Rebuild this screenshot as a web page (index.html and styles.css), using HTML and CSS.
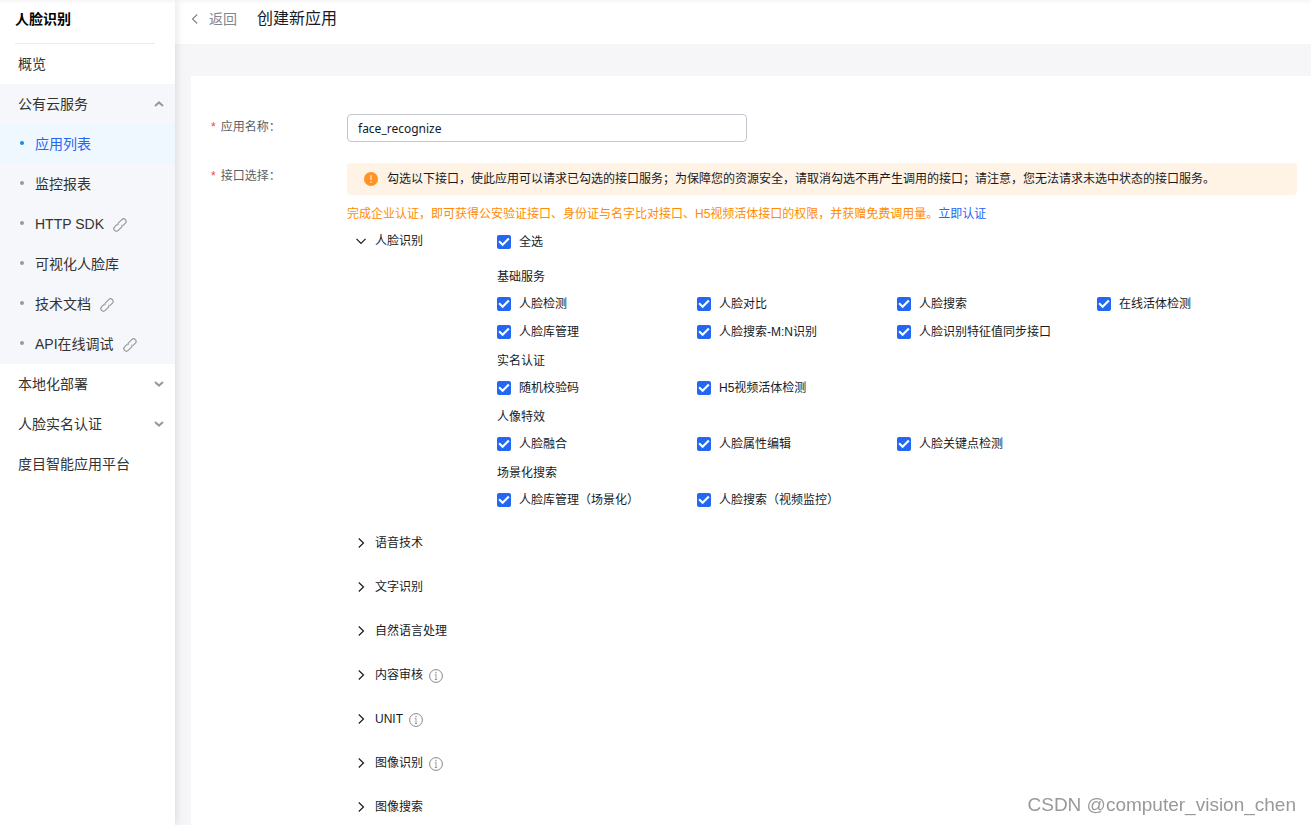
FILE: index.html
```html
<!DOCTYPE html>
<html lang="zh-CN">
<head>
<meta charset="utf-8">
<title>创建新应用</title>
<link rel="stylesheet" href="styles.css">
</head>
<body>
<svg class="sprite" aria-hidden="true">
  <symbol id="chevron" viewBox="0 0 12 12"><path d="M1.500 3.800 6 8.500 10.500 3.800" fill="none" stroke="currentColor"/></symbol>
  <symbol id="caret" viewBox="0 0 12 12"><path d="M2 4 6 7.600 10 4" fill="none" stroke="currentColor"/></symbol>
  <symbol id="link" viewBox="0 0 14 14"><g fill="none" stroke="currentColor" stroke-width="1.200"><path d="M5.200 7.200C4.700 6.200 4.900 5.400 5.700 4.600L8.800 1.600a2.500 2.500 0 0 1 3.600 3.600L10 7.600"/><path d="M8.800 6.800C9.300 7.800 9.100 8.600 8.300 9.400L5.200 12.400a2.500 2.500 0 0 1-3.600-3.600L4 6.400"/></g></symbol>
  <symbol id="info" viewBox="0 0 14 14"><circle cx="7" cy="7" r="6.400" fill="none" stroke="currentColor"/><path d="M7 5.500v5M5.800 5.500H7M5.800 10.500h2.400" fill="none" stroke="currentColor" stroke-width=".8"/><circle cx="7" cy="3.500" r=".7" fill="currentColor"/></symbol>
</svg>
<div class="layout">
  <aside class="sidebar">
    <h2 class="sidebar-title">人脸识别</h2>
    <nav class="menu">
      <a class="menu-item" href="#">概览</a>
      <div class="menu-group">
        <button class="menu-item" type="button" aria-expanded="true">公有云服务<svg class="menu-arrow up"><use href="#caret"/></svg></button>
        <a class="menu-item sub active" href="#">应用列表</a>
        <a class="menu-item sub" href="#">监控报表</a>
        <a class="menu-item sub" href="#">HTTP SDK<svg class="link-icon"><use href="#link"/></svg></a>
        <a class="menu-item sub" href="#">可视化人脸库</a>
        <a class="menu-item sub" href="#">技术文档<svg class="link-icon"><use href="#link"/></svg></a>
        <a class="menu-item sub" href="#">API在线调试<svg class="link-icon"><use href="#link"/></svg></a>
      </div>
      <button class="menu-item" type="button" aria-expanded="false">本地化部署<svg class="menu-arrow"><use href="#caret"/></svg></button>
      <button class="menu-item" type="button" aria-expanded="false">人脸实名认证<svg class="menu-arrow"><use href="#caret"/></svg></button>
      <a class="menu-item" href="#">度目智能应用平台</a>
    </nav>
  </aside>
  <main class="main">
    <header class="page-header">
      <a class="back" href="#"><svg class="back-icon"><use href="#chevron"/></svg>返回</a>
      <h1 class="page-title">创建新应用</h1>
    </header>
    <form class="card">
      <div class="form-row">
        <label class="form-label" for="app-name"><span class="required">*</span>应用名称：</label>
        <input class="text-input" id="app-name" type="text" value="face_recognize">
      </div>
      <div class="form-row">
        <span class="form-label"><span class="required">*</span>接口选择：</span>
        <div class="form-field">
          <div class="alert">
            <svg class="alert-icon" viewBox="0 0 14 14"><circle cx="7" cy="7" r="7" fill="#ff9326"/><path d="M7 3v5M7 9.500v1.500" stroke="#ffe3c4" stroke-width="1.300"/></svg>
            <span>勾选以下接口，使此应用可以请求已勾选的接口服务；为保障您的资源安全，请取消勾选不再产生调用的接口；请注意，您无法请求未选中状态的接口服务。</span>
          </div>
          <p class="tip">完成企业认证，即可获得公安验证接口、身份证与名字比对接口、H5视频活体接口的权限，并获赠免费调用量。<a class="tip-link" href="#">立即认证</a></p>
          <section class="service open">
            <button class="service-name" type="button" aria-expanded="true"><svg class="service-arrow"><use href="#chevron"/></svg>人脸识别</button>
            <div class="service-body">
              <label class="check all"><input type="checkbox" checked>全选</label>
              <h3 class="group-name">基础服务</h3>
              <div class="checks">
                <label class="check"><input type="checkbox" checked>人脸检测</label>
                <label class="check"><input type="checkbox" checked>人脸对比</label>
                <label class="check"><input type="checkbox" checked>人脸搜索</label>
                <label class="check"><input type="checkbox" checked>在线活体检测</label>
                <label class="check"><input type="checkbox" checked>人脸库管理</label>
                <label class="check"><input type="checkbox" checked>人脸搜索-M:N识别</label>
                <label class="check"><input type="checkbox" checked>人脸识别特征值同步接口</label>
              </div>
              <h3 class="group-name">实名认证</h3>
              <div class="checks">
                <label class="check"><input type="checkbox" checked>随机校验码</label>
                <label class="check"><input type="checkbox" checked>H5视频活体检测</label>
              </div>
              <h3 class="group-name">人像特效</h3>
              <div class="checks">
                <label class="check"><input type="checkbox" checked>人脸融合</label>
                <label class="check"><input type="checkbox" checked>人脸属性编辑</label>
                <label class="check"><input type="checkbox" checked>人脸关键点检测</label>
              </div>
              <h3 class="group-name">场景化搜索</h3>
              <div class="checks">
                <label class="check"><input type="checkbox" checked>人脸库管理（场景化）</label>
                <label class="check"><input type="checkbox" checked>人脸搜索（视频监控）</label>
              </div>
            </div>
          </section>
          <button class="service-name" type="button"><svg class="service-arrow right"><use href="#chevron"/></svg>语音技术</button>
          <button class="service-name" type="button"><svg class="service-arrow right"><use href="#chevron"/></svg>文字识别</button>
          <button class="service-name" type="button"><svg class="service-arrow right"><use href="#chevron"/></svg>自然语言处理</button>
          <button class="service-name" type="button"><svg class="service-arrow right"><use href="#chevron"/></svg>内容审核<svg class="info-icon"><use href="#info"/></svg></button>
          <button class="service-name" type="button"><svg class="service-arrow right"><use href="#chevron"/></svg>UNIT<svg class="info-icon"><use href="#info"/></svg></button>
          <button class="service-name" type="button"><svg class="service-arrow right"><use href="#chevron"/></svg>图像识别<svg class="info-icon"><use href="#info"/></svg></button>
          <button class="service-name" type="button"><svg class="service-arrow right"><use href="#chevron"/></svg>图像搜索</button>
        </div>
      </div>
    </form>
  </main>
</div>
<div class="watermark">CSDN @computer_vision_chen</div>
</body>
</html>
```

FILE: styles.css
```css
* { box-sizing: border-box; }

body {
  margin: 0;
  font: 12px/20px "Liberation Sans", "Noto Sans CJK SC", sans-serif;
  color: #151b26;
  background: #f6f6f8;
}

h1, h2, h3, p { margin: 0; font-weight: 400; }
a { text-decoration: none; color: inherit; }
button {
  border: 0;
  padding: 0;
  background: none;
  font: inherit;
  color: inherit;
  text-align: left;
  cursor: pointer;
}
svg { flex: none; }
.sprite { display: none; }

.layout {
  display: flex;
  height: 100vh;
  overflow: hidden;
}

/* Sidebar */
.sidebar {
  flex: none;
  width: 175px;
  background: linear-gradient(#f5f5f5, #fff 4px);
  box-shadow: 0 0 10px rgba(0, 0, 0, .14);
  z-index: 1;
}
.sidebar-title {
  margin: 0 20px 0 15px;
  height: 44px;
  border-bottom: 1px solid #ebebeb;
  font-size: 14px;
  line-height: 38px;
  font-weight: 700;
  color: #000;
}
.menu-item {
  display: flex;
  align-items: center;
  width: 100%;
  height: 40px;
  padding: 0 10px 0 18px;
  font-size: 14px;
  color: #333;
}
.menu-group { background: #f5f7fa; }
.menu-arrow {
  width: 12px;
  height: 12px;
  margin-left: auto;
  color: #999;
  stroke-width: 2;
}
.up { transform: rotate(180deg); }
.sub::before {
  content: "";
  width: 4px;
  height: 4px;
  margin: 0 11px 2px 2px;
  border-radius: 50%;
  background: #999;
}
.active { background: #f0f8ff; color: #2468f2; }
.active::before { background: #108cee; }
.link-icon {
  width: 14px;
  height: 14px;
  margin: 2px 0 0 9px;
  color: #999;
}

/* Page */
.main { flex: 1; min-width: 0; }
.page-header {
  display: flex;
  align-items: center;
  gap: 20px;
  height: 44px;
  padding: 0 14px 6px;
  background: linear-gradient(#f5f5f5, #fff 4px);
}
.back {
  display: flex;
  align-items: center;
  gap: 8px;
  font-size: 14px;
  color: #84868c;
}
.back-icon {
  width: 12px;
  height: 12px;
  stroke-width: 1.2;
  transform: rotate(90deg);
}
.page-title { font-size: 16px; }

.card {
  display: flex;
  flex-direction: column;
  gap: 21px;
  margin: 32px 0 0 16px;
  padding: 38px 14px 24px 20px;
  background: #fff;
}
.form-row { display: flex; align-items: flex-start; }
.form-label {
  flex: none;
  display: flex;
  gap: 5px;
  width: 136px;
  padding-top: 3px;
  color: #5c5f66;
}
.required { color: #f33e3e; }
.form-field { flex: 1; min-width: 0; }
.text-input {
  width: 400px;
  height: 28px;
  padding: 0 10px;
  border: 1px solid #c3c6cc;
  border-radius: 4px;
  background: #fff;
  font: 12px "Noto Sans", "Noto Sans CJK SC", sans-serif;
  color: #151b26;
}

.alert {
  display: flex;
  align-items: center;
  gap: 9px;
  padding: 6px 17px;
  border-radius: 4px;
  background: #fff3e6;
}
.alert-icon { width: 14px; height: 14px; }
.tip { margin-top: 9px; color: #ff8b00; }
.tip-link { color: #2468f2; }

.service { display: flex; padding-bottom: 6px; }
.service-name {
  display: flex;
  align-items: center;
  height: 44px;
  padding-left: 8px;
}
.service .service-name { width: 150px; height: 34px; }
.service-arrow {
  width: 12px;
  height: 12px;
  margin-right: 8px;
  stroke-width: 1.2;
}
.right { transform: rotate(-90deg); }
.info-icon {
  width: 14px;
  height: 14px;
  margin: 2px 0 0 6px;
  color: #84868c;
}

.service-body { flex: 1; min-width: 0; }
.group-name { font-size: 12px; line-height: 28px; }
.checks {
  display: grid;
  grid-template-columns: repeat(auto-fill, 200px);
  margin: -1px 0 1px;
}
.check {
  display: flex;
  align-items: center;
  gap: 8px;
  height: 28px;
}
.all { width: 50px; height: 36px; margin-bottom: 3px; }
.check input {
  flex: none;
  appearance: none;
  display: flex;
  width: 14px;
  height: 14px;
  margin: 0;
  border-radius: 2px;
  background: #c3c6cc;
}
.check input:checked { background: #2468f2; }
.check input:checked::after {
  content: "";
  width: 14px;
  height: 14px;
  background: #fff;
  clip-path: polygon(10% 50%, 20% 40%, 40% 59%, 79% 20%, 90% 30%, 40% 80%);
}

.watermark {
  position: fixed;
  right: 15px;
  bottom: 8px;
  font-size: 19px;
  line-height: 24px;
  color: #999;
}
```
